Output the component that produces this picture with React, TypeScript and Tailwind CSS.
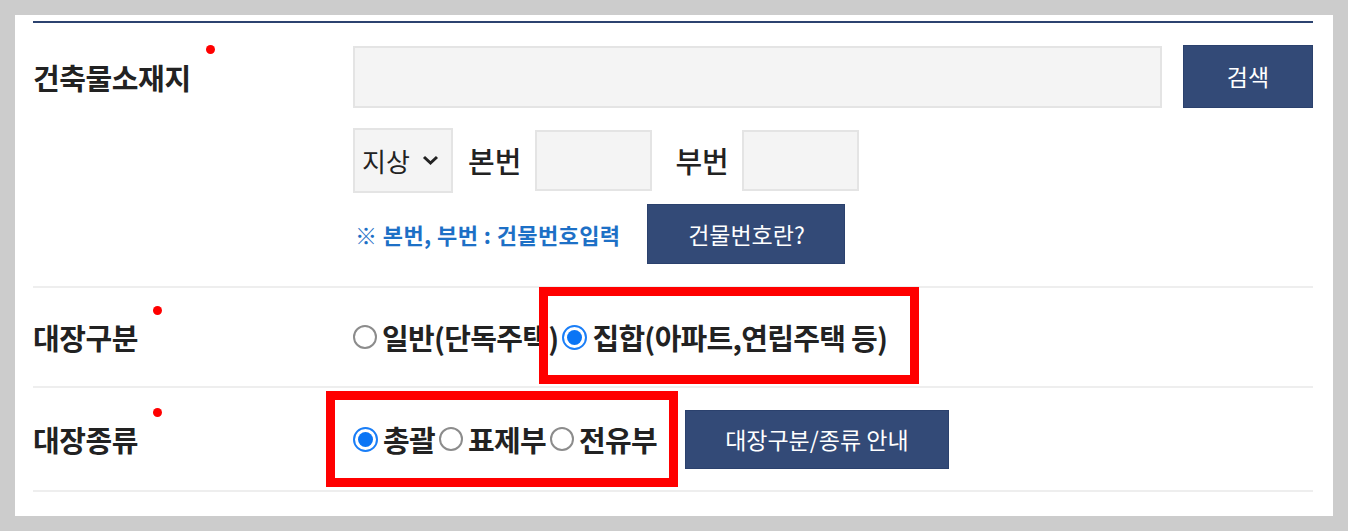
import React from "react";

const font = { fontFamily: '"Noto Sans CJK KR", "Noto Sans", sans-serif' };

function Dot() {
  return <span className="ml-[15px] mb-[54px] w-[9px] h-[9px] rounded-full bg-[#ff0000] shrink-0" />;
}

function Label({ text }: { text: string }) {
  return (
    <div className="flex items-center">
      <span className="text-[29px] leading-[32px] font-bold text-[#222222] tracking-[-0.4px]">{text}</span>
      <Dot />
    </div>
  );
}

function Radio({ checked }: { checked?: boolean }) {
  if (checked) {
    return (
      <span className="w-[25px] h-[25px] rounded-full border-[2px] border-[#1a7ef7] bg-white flex items-center justify-center shrink-0">
        <span className="w-[15px] h-[15px] rounded-full bg-[#0a75f5]" />
      </span>
    );
  }
  return <span className="w-[24px] h-[24px] rounded-full border-[2px] border-[#8c8c8c] bg-white shrink-0" />;
}

function Opt({ checked, text }: { checked?: boolean; text: string }) {
  return (
    <div className="flex items-center">
      <Radio checked={checked} />
      <span className="ml-[5px] mr-[4px] text-[29px] leading-[32px] font-bold text-[#222222] tracking-[-0.7px]">{text}</span>
    </div>
  );
}

function Btn({ text, w, h }: { text: string; w: string; h: string }) {
  return (
    <button className={`${w} ${h} bg-[#334a77] border border-[#2b416d] text-white text-[23px] leading-none flex items-center justify-center shrink-0`}>
      {text}
    </button>
  );
}

export default function App() {
  return (
    <div className="w-[1348px] h-[531px] bg-[#cccccc] p-[15px]" style={font}>
      <div className="w-full h-full bg-white pl-[18px] pr-[20px] pt-[6px]">
        <div className="border-t-[2px] border-[#2c4370]">
          {/* Row 1 */}
          <div className="flex pt-[22px] pb-[22px] border-b-[2px] border-[#eeeeee]">
            <div className="w-[320px] h-[63px] flex items-center shrink-0">
              <Label text="건축물소재지" />
            </div>
            <div className="flex-1 flex flex-col">
              <div className="flex items-center">
                <div className="flex-1 h-[62px] bg-[#f4f4f4] border-[2px] border-[#e4e4e4]" />
                <div className="ml-[21px]">
                  <Btn text="검색" w="w-[130px]" h="h-[63px]" />
                </div>
              </div>
              <div className="flex items-center mt-[20px] h-[65px]">
                <div className="w-[100px] h-[65px] bg-[#f4f4f4] border-[2px] border-[#e4e4e4] flex items-center pl-[7px] text-[26px] text-[#222222]">
                  <span className="leading-none">지상</span>
                  <svg className="ml-[12px]" width="17" height="11" viewBox="0 0 17 11">
                    <polyline points="2,2 8.5,8 15,2" fill="none" stroke="#222" strokeWidth="3" />
                  </svg>
                </div>
                <span className="ml-[15px] text-[29px] leading-none font-medium text-[#222222]">본번</span>
                <div className="ml-[14px] w-[117px] h-[61px] bg-[#f4f4f4] border-[2px] border-[#e4e4e4]" />
                <span className="ml-[23px] text-[29px] leading-none font-medium text-[#222222]">부번</span>
                <div className="ml-[13px] w-[117px] h-[61px] bg-[#f4f4f4] border-[2px] border-[#e4e4e4]" />
              </div>
              <div className="flex items-center mt-[11px]">
                <span className="ml-[2px] text-[22px] font-bold text-[#1d70c6] tracking-[0.4px] leading-none">
                  ※ 본번, 부번 : 건물번호입력
                </span>
                <div className="ml-[27px]">
                  <Btn text="건물번호란?" w="w-[198px]" h="h-[60px]" />
                </div>
              </div>
            </div>
          </div>
          {/* Row 2 */}
          <div className="flex h-[100px] border-b-[2px] border-[#eeeeee] items-center">
            <div className="w-[320px] shrink-0">
              <Label text="대장구분" />
            </div>
            <div className="relative flex items-center h-full">
              <Opt text="일반(단독주택)" />
              <Opt checked text="집합(아파트,연립주택 등)" />
              <div className="absolute left-[186px] top-[-1px] w-[380px] h-[97px] border-[9px] border-[#ff0000]" />
            </div>
          </div>
          {/* Row 3 */}
          <div className="flex h-[104px] border-b-[2px] border-[#eeeeee] items-center">
            <div className="w-[320px] shrink-0">
              <Label text="대장종류" />
            </div>
            <div className="relative flex items-center h-full">
              <Opt checked text="총괄" />
              <Opt text="표제부" />
              <Opt text="전유부" />
              <div className="ml-[24px]">
                <Btn text="대장구분/종류 안내" w="w-[264px]" h="h-[59px]" />
              </div>
              <div className="absolute left-[-27px] top-[3px] w-[352px] h-[96px] border-[9px] border-[#ff0000]" />
            </div>
          </div>
        </div>
      </div>
    </div>
  );
}
